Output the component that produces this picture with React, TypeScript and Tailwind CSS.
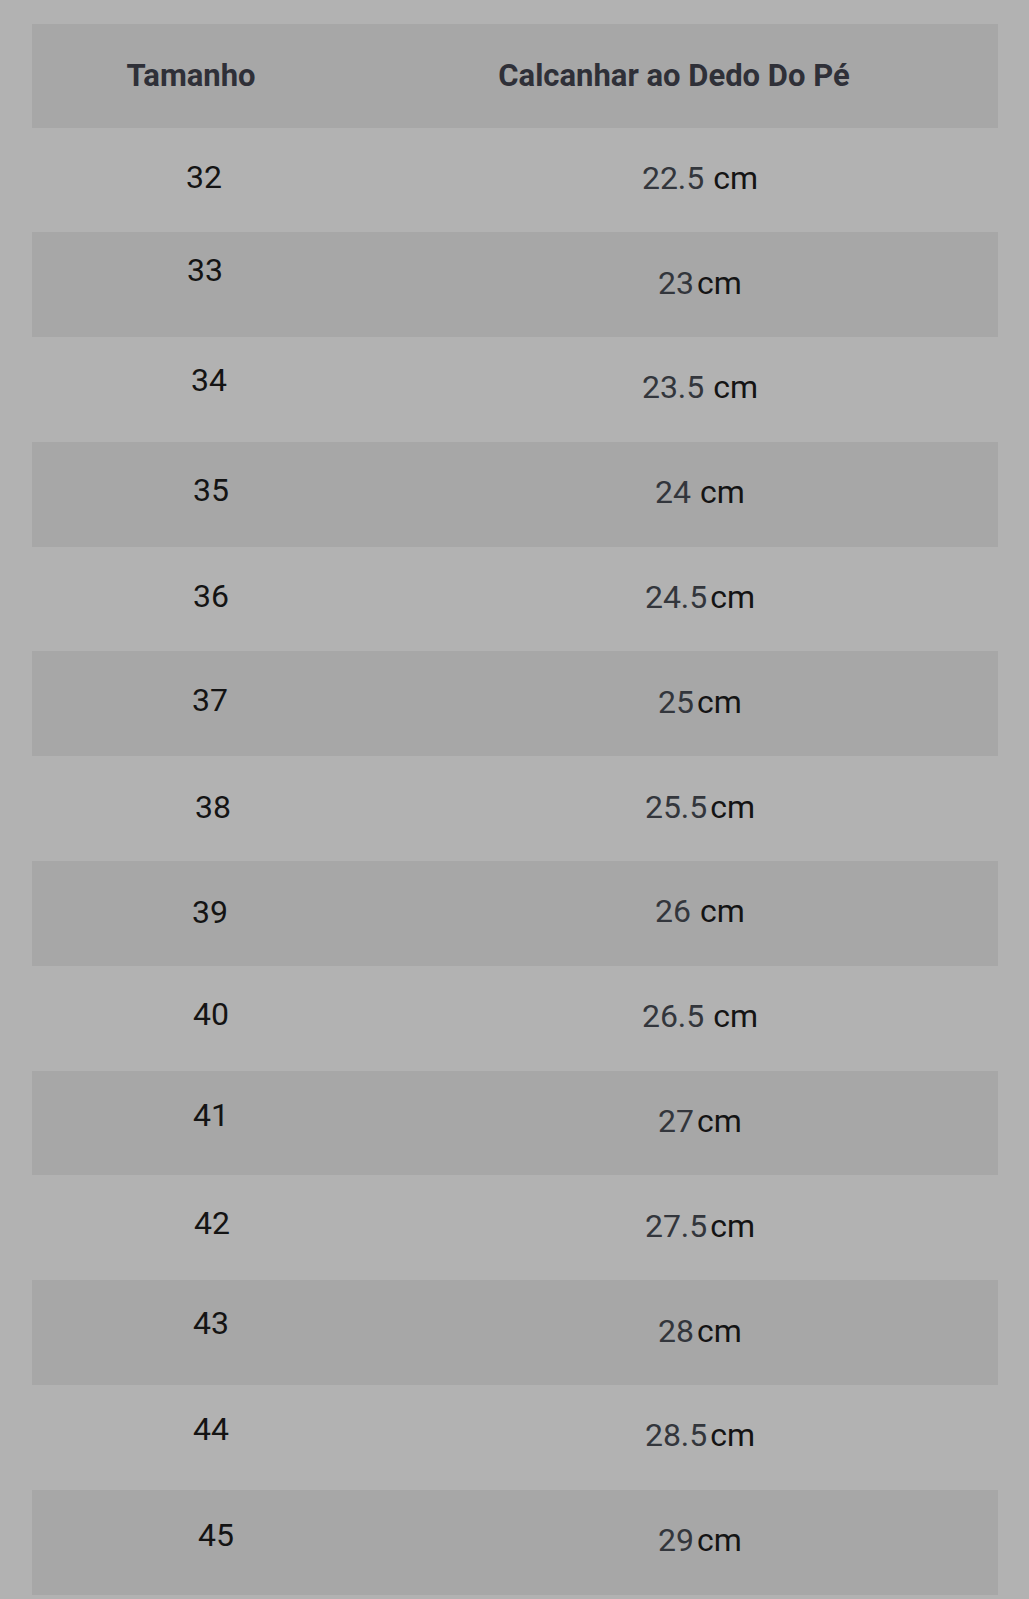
import React from "react";

interface SizeRow {
	size: string;
	num: string;
	unit: string;
	spaced: boolean;
	sizeCls: string;
}

// shoe size chart, BR sizes -> heel-to-toe length
const rows: SizeRow[] = [
	{ size: "32", num: "22.5", unit: "cm", spaced: true, sizeCls: "pl-[26px] pb-[6px]" },
	{ size: "33", num: "23", unit: "cm", spaced: false, sizeCls: "pl-[28px] pb-[30px]" },
	{ size: "34", num: "23.5", unit: "cm", spaced: true, sizeCls: "pl-[36px] pb-[18px]" },
	{ size: "35", num: "24", unit: "cm", spaced: true, sizeCls: "pl-[40px] pb-[8px]" },
	{ size: "36", num: "24.5", unit: "cm", spaced: false, sizeCls: "pl-[40px] pb-[6px]" },
	{ size: "37", num: "25", unit: "cm", spaced: false, sizeCls: "pl-[38px] pb-[7px]" },
	{ size: "38", num: "25.5", unit: "cm", spaced: false, sizeCls: "pl-[44px] pb-[4px]" },
	{ size: "39", num: "26", unit: "cm", spaced: true, sizeCls: "pl-[38px] pb-[2px]" },
	{ size: "40", num: "26.5", unit: "cm", spaced: true, sizeCls: "pl-[40px] pb-[9px]" },
	{ size: "41", num: "27", unit: "cm", spaced: false, sizeCls: "pl-[40px] pb-[16px]" },
	{ size: "42", num: "27.5", unit: "cm", spaced: false, sizeCls: "pl-[42px] pb-[10px]" },
	{ size: "43", num: "28", unit: "cm", spaced: false, sizeCls: "pl-[40px] pb-[19px]" },
	{ size: "44", num: "28.5", unit: "cm", spaced: false, sizeCls: "pl-[40px] pb-[16px]" },
	{ size: "45", num: "29", unit: "cm", spaced: false, sizeCls: "pl-[50px] pb-[14px]" },
];

const App: React.FC = () => {
	return (
		<div className="min-h-[1599px] w-[1029px] bg-[#b2b2b2] pt-[24px] pl-[32px] font-['Roboto',sans-serif]">
			<div className="w-[966px]">
				<div className="grid grid-cols-[318px_1fr] h-[103.5px] bg-[#a7a7a7] text-[31px] font-bold text-[#2f3038]">
					<div className="flex items-center justify-center">Tamanho</div>
					<div className="flex items-center justify-center">Calcanhar ao Dedo Do Pé</div>
				</div>
				{rows.map((r, i) => (
					<div
						key={r.size}
						className={
							"grid grid-cols-[318px_1fr] h-[104.8px] text-[32px] " +
							(i % 2 === 1 ? "bg-[#a7a7a7]" : "bg-[#b2b2b2]")
						}
					>
						<div className={"flex items-center justify-center text-[#141414] " + r.sizeCls}>
							{r.size}
						</div>
						<div className="flex items-center justify-center pl-[52px] pb-[4px]">
							<span className="text-[#33363c]">{r.num}</span>
							<span className={r.spaced ? "ml-[9px] text-[#141414]" : "ml-[3px] text-[#141414]"}>
								{r.unit}
							</span>
						</div>
					</div>
				))}
			</div>
		</div>
	);
};

export default App;
